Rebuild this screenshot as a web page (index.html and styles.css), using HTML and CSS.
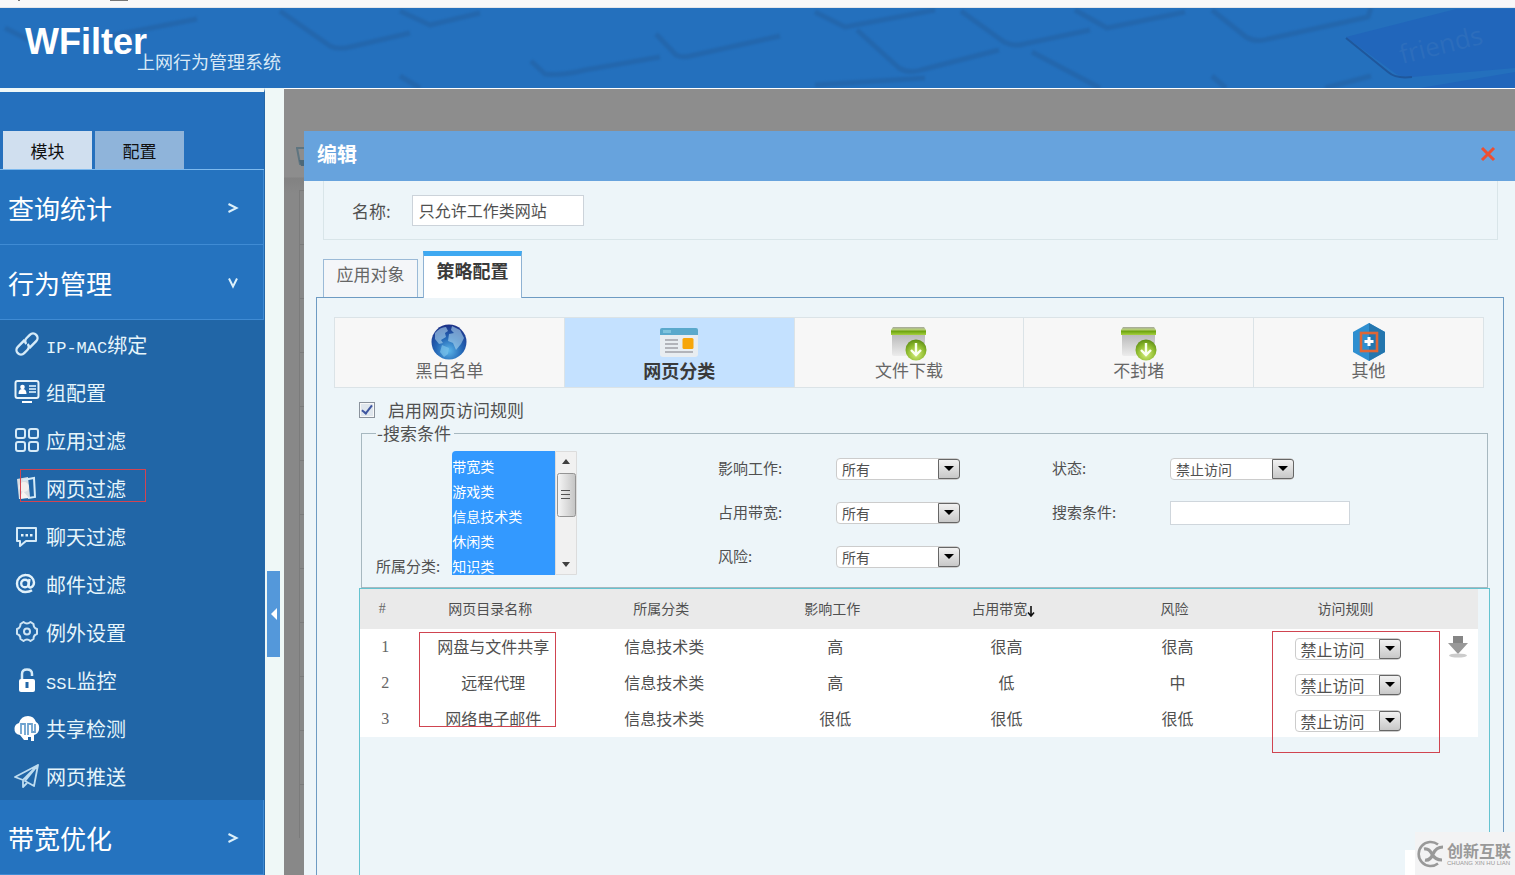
FILE: index.html
```html
<!DOCTYPE html>
<html lang="zh-CN">
<head>
<meta charset="utf-8">
<title>WFilter 上网行为管理系统</title>
<link rel="stylesheet" href="styles.css">
</head>
<body>
<svg width="0" height="0" class="defs" aria-hidden="true">
  <defs>
    <linearGradient id="boxg" x1="0" y1="0" x2="0" y2="1"><stop offset="0" stop-color="#b4b4b4"/><stop offset="1" stop-color="#ececec"/></linearGradient>
    <linearGradient id="lidg" x1="0" y1="0" x2="0" y2="1"><stop offset="0" stop-color="#a5a5a0"/><stop offset=".3" stop-color="#b8cf7a"/><stop offset=".55" stop-color="#6fa512"/><stop offset="1" stop-color="#a6d040"/></linearGradient>
    <radialGradient id="ballg" cx=".5" cy=".7" r=".7"><stop offset="0" stop-color="#d6ee7c"/><stop offset=".6" stop-color="#8fbc30"/><stop offset="1" stop-color="#5d8d14"/></radialGradient>
    <radialGradient id="globeg" cx=".5" cy=".75" r=".75"><stop offset="0" stop-color="#5ab4e8"/><stop offset=".5" stop-color="#2467b6"/><stop offset="1" stop-color="#1b2f86"/></radialGradient>
    <linearGradient id="thumbg"><stop offset="0" stop-color="#f6f6f6"/><stop offset="1" stop-color="#c4c4c4"/></linearGradient>
    <symbol id="package" viewBox="0 0 38 38">
      <path d="M2 9h33v22q0 2-2 2H4q-2 0-2-2z" fill="url(#boxg)"/>
      <path d="M3 4h31l2 3v5H1V7z" fill="url(#lidg)"/>
      <circle cx="26" cy="27" r="10.500" fill="url(#ballg)"/>
      <path d="M26 20v11M21 27l5 5 5-5" fill="none" stroke="#fafff0" stroke-width="2.400"/>
    </symbol>
  </defs>
</svg>
<div class="strip"><svg width="140" height="8" aria-hidden="true"><path d="M18 0h2v1h-2zM110 0h18v1h-18z" fill="#777"/></svg></div>
<header class="banner">
  <svg class="keys" viewBox="0 0 1515 80" preserveAspectRatio="xMaxYMin slice" aria-hidden="true">
    <g fill="none" stroke="#235e9e" stroke-width="5" stroke-linejoin="round" opacity=".5">
      <path d="M5 20l28 14M105 29l92-18M280 3l50 35q8 4 20 1l60-14M400 3l30 14 50-12M400 68l20 12"/>
      <path d="M531 53l14 13q16 2 40-4l75-13M656 26l20 21q6 3 14 1l90-20M815 4l30 15 90-17M857 22l42 38q10 6 22 2l78-20M961 3l43 31q10 5 20 2l66-14M1032 44l68 36M1075 2l32 18 78-16"/>
      <path d="M1212 2l34 27q10 6 22 2l100-22 3-9M815 77l110-7M1212 68l14 12M1325 80l46-12"/>
    </g>
    <path d="M1346 29l110-28h59v59l-103 9q-12 1-20-6zM1420 80l95-16v16z" fill="#2166bb"/>
    <path d="M1346 30l42 34q8 7 24 5" fill="none" stroke="#1f579c" stroke-width="2"/>
    <text x="1402" y="56" transform="rotate(-14 1402 56)" class="keycap">friends</text>
  </svg>
  <div class="brand"><h1>WFilter</h1><p>上网行为管理系统</p></div>
</header>
<div class="shell">
  <nav class="side">
    <div class="side-tabs"><button class="on">模块</button><button>配置</button></div>
    <button class="section">查询统计<svg width="12" height="12" viewBox="0 0 12 12"><path d="M1.500 2L9.500 6l-8 4"/></svg></button>
    <button class="section">行为管理<svg width="12" height="12" viewBox="0 0 12 12"><path d="M2 1.500L6 9.500l4-8"/></svg></button>
    <ul class="menu">
      <li><a href="#"><svg viewBox="0 0 26 26"><g transform="rotate(-45 13 13)" fill="none" stroke="#d6ebf8" stroke-width="2.400"><path d="M13 10V8.500H4.500a4.500 4.500 0 0 0 0 9H9q4 0 4.500-4"/><path d="M13 16v1.500h8.500a4.500 4.500 0 0 0 0-9H17q-4 0-4.500 4"/></g></svg><span><span class="latin">IP-MAC</span>绑定</span></a></li>
      <li><a href="#"><svg viewBox="0 0 26 26"><rect x="1.500" y="2" width="23" height="17" rx="2" fill="none" stroke="#e6f3fa" stroke-width="2"/><circle cx="8.500" cy="8" r="2.300" fill="#fff"/><path d="M4.500 15q0-5 4-5t4 5zM8 22h10v2H8z" fill="#fff"/><path d="M15 7h7M15 10h7M15 13h7" stroke="#b7d6ed" stroke-width="2"/></svg>组配置</a></li>
      <li><a href="#"><svg viewBox="0 0 26 26" fill="none" stroke="#d6ebf8" stroke-width="2"><rect x="2" y="2" width="9" height="9" rx="2"/><rect x="15" y="2" width="9" height="9" rx="2"/><rect x="2" y="15" width="9" height="9" rx="2"/><rect x="15" y="15" width="9" height="9" rx="2"/></svg>应用过滤</a></li>
      <li class="marked"><a href="#"><svg viewBox="0 0 26 26"><path d="M3 4l11-2 2 20-11 2z" fill="#d9dde2"/><path d="M9 5L20 3l1 19-7 1" fill="none" stroke="#d6ebf8" stroke-width="2"/><circle cx="10" cy="12" r="5" fill="#f2efee"/><path d="M5 24l4-8 6 7z" fill="#f7f4f1"/></svg>网页过滤</a></li>
      <li><a href="#"><svg viewBox="0 0 26 26"><path d="M3 5h19v13H12l-6 5v-5H3z" fill="none" stroke="#d6ebf8" stroke-width="2" stroke-linejoin="round"/><path d="M7 11h2.500v2.500H7zM11.500 11H14v2.500h-2.500zM16 11h2.500v2.500H16z" fill="#e6f3fa"/></svg>聊天过滤</a></li>
      <li><a href="#"><svg viewBox="0 0 26 26" fill="none" stroke="#e2f2fb" stroke-width="2.400"><circle cx="11" cy="12.500" r="3.800"/><path d="M15.500 8l-1 6q0 3 2.500 2.300Q20 15 20 11.500A8 8 0 0 0 12 4a8.600 8.600 0 0 0-9 8.700A8.200 8.200 0 0 0 11.500 21q4 0 6.500-1.700"/></svg>邮件过滤</a></li>
      <li><a href="#"><svg viewBox="0 0 26 26" fill="none" stroke="#cfe5f4" stroke-width="2"><path d="M9.500 3q3.500 3 7 0l3 2q0 4 3.500 5v5q-3.500 1-3.500 5l-3 2q-3.500-3-7 0l-3-2q0-4-3.500-5v-5q3.500-1 3.500-5z" stroke-linejoin="round"/><circle cx="13" cy="12.500" r="3"/></svg>例外设置</a></li>
      <li><a href="#"><svg viewBox="0 0 26 26"><path d="M8 13V7q0-4.500 5-4.500T18 7v2" fill="none" stroke="#d6ebf8" stroke-width="2.500"/><rect x="5" y="12" width="16" height="13" rx="2" fill="#fff"/><path d="M13 15v6" stroke="#2167a8" stroke-width="3"/></svg><span><span class="latin">SSL</span>监控</span></a></li>
      <li><a href="#"><svg viewBox="0 0 26 26"><path d="M6 20Q0 19 .5 13 1 9 5 8q2-7 9-7 6 0 8 6 4 2 3 8-1 4-5 5v6h-3v-4h-3v3h-4z" fill="#fff"/><path d="M7 19V9h4v11M14 20V9h4v9M21 9v8h-3" fill="none" stroke="#6da2cf" stroke-width="1.800"/></svg>共享检测</a></li>
      <li><a href="#"><svg viewBox="0 0 26 26" fill="none" stroke="#bddcf0" stroke-width="1.800" stroke-linejoin="round"><path d="M24 2L1 14l8 3zM24 2L11 18l9 5zM9 17v7l4-4"/></svg>网页推送</a></li>
    </ul>
    <button class="section">带宽优化<svg width="12" height="12" viewBox="0 0 12 12"><path d="M1.500 2L9.500 6l-8 4"/></svg></button>
  </nav>
  <div class="gutter"><button class="collapse" aria-label="收起菜单"></button></div>
  <main class="work">
    <div class="dimmed" aria-hidden="true"><svg width="20" height="20" viewBox="0 0 20 20"><path d="M2 1h16M3 1l3 16h14" fill="none" stroke="#5f7580" stroke-width="2"/><path d="M5 13h15v6H7z" fill="#4d6878"/></svg><i></i><i></i><i></i><i></i><i></i><i></i><i></i><i></i><i></i><i></i><i></i><i></i></div>
    <section class="dialog">
      <header class="dialog-head"><h2>编辑</h2><button aria-label="关闭"><svg width="16" height="16" viewBox="0 0 16 16"><path d="M2 2l12 12M14 2L2 14" stroke="#ec4f32" stroke-width="3"/></svg></button></header>
      <div class="dialog-body">
        <div class="name-row"><label for="name">名称:</label><input id="name" value="只允许工作类网站"></div>
        <div class="tabs"><button>应用对象</button><button class="on">策略配置</button></div>
        <div class="panel">
          <div class="kinds">
            <button><svg viewBox="0 0 38 38"><circle cx="19" cy="19" r="17.500" fill="url(#globeg)"/><path d="M5 10q5-6 11-6l2 4-3 2 1 4-5 3 2 3-4 1-4-5zM22 3l8 4 4 8-3 6-5 6-3-7-5-2 1-7 5-1-3-3z" fill="#aed5ef" opacity=".6"/><path d="M12 22l7 3-1 6-4 3-4-5z" fill="#7cc3eb" opacity=".7"/></svg>黑白名单</button>
            <button class="on"><svg viewBox="0 0 38 38"><path d="M0 12h38v19q0 3-3 3H3q-3 0-3-3z" fill="#e8edf1"/><path d="M0 7q0-2 2-2h34q2 0 2 2v5H0z" fill="#5aa9cc"/><path d="M3 7h8v3H3z" fill="#7fc4de"/><rect x="22.500" y="15" width="11" height="11" rx="1.500" fill="#f6a60b"/><path d="M5 17h13M5 21h13M5 25h13M5 29h28" stroke="#b2b4ba" stroke-width="2"/></svg>网页分类</button>
            <button><svg><use href="#package"/></svg>文件下载</button>
            <button><svg><use href="#package"/></svg>不封堵</button>
            <button><svg viewBox="0 0 38 38"><path d="M19 0l16 9v20l-16 9-16-9V9z" fill="#2f8fd0"/><path d="M19 0l16 9v20l-16 9z" fill="#2476ae"/><rect x="11" y="10" width="16" height="18" fill="none" stroke="#df6636" stroke-width="2.600"/><path d="M19 14v9M14.500 18.500h9" stroke="#fff" stroke-width="3"/></svg>其他</button>
          </div>
          <div class="rules">
            <label class="enable"><input type="checkbox" checked>启用网页访问规则</label>
            <fieldset class="search">
              <legend>-搜索条件</legend>
              <div class="filters">
                <div class="cat">
                  <label for="cat">所属分类:</label>
                  <div class="list">
                    <select id="cat" multiple size="5"><option selected>带宽类</option><option selected>游戏类</option><option selected>信息技术类</option><option selected>休闲类</option><option selected>知识类</option></select>
                    <svg width="22" height="124" viewBox="0 0 22 124" aria-hidden="true"><path d="M.5.5h21v123H.500z" fill="#f1f1f1" stroke="#dcdcdc"/><path d="M7 13l4-5 4 5zM7 111h8l-4 5z" fill="#404040"/><rect x="2.500" y="22.500" width="18" height="43" rx="2" fill="url(#thumbg)" stroke="#949494"/><path d="M6 39.500h9M6 43.500h9M6 47.500h9" stroke="#555"/></svg>
                  </div>
                </div>
                <div class="pairs">
                  <label for="work">影响工作:</label><span class="pick"><select id="work"><option>所有</option></select></span>
                  <label for="band">占用带宽:</label><span class="pick"><select id="band"><option>所有</option></select></span>
                  <label for="risk">风险:</label><span class="pick"><select id="risk"><option>所有</option></select></span>
                </div>
                <div class="pairs">
                  <label for="state">状态:</label><span class="pick"><select id="state"><option>禁止访问</option></select></span>
                  <label for="term">搜索条件:</label><input id="term">
                </div>
              </div>
            </fieldset>
            <div class="results">
              <div class="table-wrap">
              <table>
                <colgroup><col class="c-num"><col class="c-data"><col class="c-data"><col class="c-data"><col class="c-data"><col class="c-data"><col class="c-data"><col class="c-act"></colgroup>
                <thead><tr><th class="num">#</th><th>网页目录名称</th><th>所属分类</th><th>影响工作</th><th>占用带宽<svg width="8" height="12" viewBox="0 0 8 12"><path d="M4 1v10M1 7.500L4 11l3-3.500" fill="none" stroke="#111" stroke-width="1.600"/></svg></th><th>风险</th><th>访问规则</th><th></th></tr></thead>
                <tbody>
                  <tr><td class="num">1</td><td>网盘与文件共享</td><td>信息技术类</td><td>高</td><td>很高</td><td>很高</td><td><span class="pick small"><select aria-label="访问规则 1"><option>禁止访问</option></select></span></td><td class="act"><button aria-label="下移"><svg width="20" height="22" viewBox="0 0 20 22"><path d="M5 0h10v7h5L10 18 0 7h5z" fill="#999"/><path d="M5 0h10v7H5z" fill="#858585"/><ellipse cx="10" cy="19.500" rx="9" ry="2" fill="#ccc"/></svg></button></td></tr>
                  <tr><td class="num">2</td><td>远程代理</td><td>信息技术类</td><td>高</td><td>低</td><td>中</td><td><span class="pick small"><select aria-label="访问规则 2"><option>禁止访问</option></select></span></td><td></td></tr>
                  <tr><td class="num">3</td><td>网络电子邮件</td><td>信息技术类</td><td>很低</td><td>很低</td><td>很低</td><td><span class="pick small"><select aria-label="访问规则 3"><option>禁止访问</option></select></span></td><td></td></tr>
                </tbody>
              </table>
              <i class="mark names"></i><i class="mark access"></i>
              </div>
            </div>
          </div>
        </div>
      </div>
    </section>
  </main>
</div>
<aside class="watermark"><svg width="28" height="28" viewBox="0 0 28 28" fill="none" stroke="#999"><path d="M21 4.500A12 12 0 1 0 21 23.500" stroke-width="2.600"/><path d="M7 9q5-1 8 5t10 6M26 7q-7 0-10 7t-8 6" stroke-width="3.200"/></svg><div><b>创新互联</b><small>CHUANG XIN HU LIAN</small></div></aside>
</body>
</html>
```

FILE: styles.css
```css
*, *::before, *::after { box-sizing: border-box; }
body {
  margin: 0;
  height: 100vh;
  display: flex;
  flex-direction: column;
  overflow: hidden;
  background: #eff8f8;
  color: #505050;
  font-family: "Noto Sans CJK SC", "Liberation Sans", sans-serif;
  font-size: 16px;
}
button, input, select { font-family: inherit; color: inherit; margin: 0; }
button { border: 0; padding: 0; background: none; cursor: pointer; }
h1, h2, p, ul { margin: 0; padding: 0; }
svg { flex: none; }
.defs { position: absolute; }

.strip { flex: none; height: 8px; background: #f8f8f9; border-bottom: 1px solid #e4e6ea; }
.strip svg { display: block; }

.banner { position: relative; flex: none; height: 80px; background: #2470bd; overflow: hidden; }
.keys { position: absolute; inset: 0; width: 100%; height: 100%; }
.keys g { filter: blur(1px); }
.keycap { font: 26px "Open Sans", sans-serif; fill: #2c6dbc; }
.brand { position: relative; color: #fff; padding: 14px 0 0 25px; }
.brand h1 { font: bold 36px/40px "Liberation Sans", sans-serif; }
.brand p { font-size: 18px; line-height: 20px; color: #d8e9f7; padding-left: 112px; margin-top: -11px; }

.shell { flex: 1; min-height: 0; display: flex; }
.side { width: 265px; flex: none; background: #2570bd; border-top: 4px solid #eff8f8; border-right: 1px solid #2467a8; }
.side-tabs { display: flex; gap: 3px; padding: 39px 0 0 3px; border-bottom: 1px solid #7db9ee; }
.side-tabs button { width: 89px; height: 38px; font-size: 17px; color: #111; background: #8fb4da; }
.side-tabs .on { background: #d0dfef; }
.section {
  display: flex;
  align-items: center;
  justify-content: space-between;
  width: 100%;
  height: 75px;
  padding: 1px 24px 0 8px;
  font-size: 26px;
  color: #fff;
  background: #2573bf;
  border: solid #3f8bd4;
  border-width: 0 1px 1px 0;
}
.section svg { fill: none; stroke: #dcf0fa; stroke-width: 2; }
.menu { list-style: none; background: #2166a7; }
.menu li { position: relative; height: 48px; }
.menu a {
  display: flex;
  align-items: center;
  gap: 6px;
  height: 100%;
  padding: 0 0 0 14px;
  font-size: 20px;
  color: #e6f5fb;
  text-decoration: none;
}
.menu svg { width: 26px; height: 26px; }
.latin { font-family: "Liberation Mono", monospace; font-size: 17px; }
.marked::after { content: ""; position: absolute; left: 20px; top: 5px; width: 126px; height: 33px; border: 1px solid #d14452; }

.gutter { width: 19px; flex: none; display: flex; flex-direction: column; padding: 483px 4px 0 2px; background: #eff8f7; }
.collapse { display: flex; align-items: center; justify-content: center; height: 86px; width: 13px; background: #5498da; }
.collapse::before { content: ""; border: solid transparent; border-width: 6px 6px 6px 0; border-right-color: #fff; }

.work { position: relative; flex: 1; min-width: 0; padding: 42px 0 0 20px; background: #8d8d8d; border-top: 1px solid #fff; }
.dimmed { position: absolute; left: 0; top: 58px; bottom: 0; width: 20px; overflow: hidden; background: linear-gradient(#8d8d8d 30px, #828282 31px, #888 46px); }
.dimmed svg { display: block; margin: 0 0 23px 10px; }
.dimmed i { display: block; height: 54px; margin-left: 15px; border: solid #7b7b7b; border-width: 1px 0 0 1px; }

.dialog { position: relative; height: 100%; display: flex; flex-direction: column; background: #edf5f9; }
.dialog-head { flex: none; height: 50px; display: flex; align-items: center; justify-content: space-between; padding: 0 19px 4px 13px; background: #67a3dd; color: #fff; }
.dialog-head h2 { font-size: 20px; line-height: 28px; }
.dialog-head svg { display: block; }
.dialog-body { flex: 1; min-height: 0; display: flex; flex-direction: column; padding: 0 11px 0 12px; }
.name-row { display: flex; align-items: center; gap: 21px; height: 59px; margin: 0 6px 0 7px; padding-left: 28px; border: 1px solid #d9e5e9; border-top: 0; font-size: 17px; }
.name-row input { width: 172px; height: 31px; padding: 0 6px; border: 1px solid #ccd3da; background: #fff; font-size: 16px; }
.tabs { display: flex; align-items: flex-end; gap: 5px; margin: 11px 0 0 7px; }
.tabs button { width: 95px; height: 38px; padding-bottom: 10px; font-size: 17px; color: #666; background: #f4f6f9; border: 1px solid #9bbad7; border-bottom: 0; }
.tabs .on { position: relative; width: 99px; height: 47px; margin-bottom: -1px; padding-bottom: 14px; font-size: 18px; font-weight: bold; color: #3a3a3a; background: #fff; border-color: #8fb2d3; border-top: 5px solid #3fa9f1; }
.panel { flex: 1; min-height: 0; display: flex; flex-direction: column; border: 1px solid #6e9bc3; border-bottom: 0; padding: 19px 13px 0 17px; }
.kinds { display: flex; flex: none; margin-right: 6px; border: 1px solid #dbe3e7; }
.kinds button { flex: 1; height: 69px; display: flex; flex-direction: column; align-items: center; padding-top: 5px; font-size: 17px; line-height: 18px; color: #666; background: #f7f7f7; }
.kinds button + button { border-left: 1px solid #dbe3e7; }
.kinds .on { background: #c4e1ff; font-size: 18px; font-weight: bold; color: #3a3a3a; }
.kinds svg { width: 38px; height: 38px; }

.rules { flex: 1; min-height: 0; display: flex; flex-direction: column; margin: 11px 0 0 25px; }
.enable { display: flex; align-items: center; gap: 13px; height: 24px; padding-bottom: 2px; font-size: 17px; line-height: 20px; }
.enable input { appearance: none; width: 16px; height: 16px; display: grid; place-items: center; background: #dfe6ed; border: 1px solid #8a929c; box-shadow: inset 0 0 0 1px #f8f8f8; }
.enable input:checked::before { content: ""; width: 6px; height: 11px; margin-bottom: 3px; border: solid #3f56a0; border-width: 0 2px 2px 0; transform: rotate(38deg); }
.search { flex: none; min-width: 0; margin: 0 2px; padding: 4px 0 8px 14px; border: 1px solid #a7b8c0; }
.search legend { padding: 0 3px 0 1px; font-size: 17px; line-height: 20px; }
.filters { display: grid; grid-template-columns: 342fr 334fr 435fr; font-size: 15px; }
.cat { display: flex; align-items: flex-end; gap: 12px; padding: 4px 0; }
.cat label { line-height: 18px; }
.list { display: flex; height: 124px; }
.list select { width: 103px; height: 124px; padding: 5px 0 0; border: 0; border-radius: 4px 0 0 0; background: #39f; font-size: 14px; overflow: hidden; scrollbar-width: none; outline: 0; }
.list option { height: 25px; min-height: 25px; padding: 0; line-height: 25px; }
.list option:checked { background: linear-gradient(#39f, #39f); color: #fff; }
.pairs { display: grid; grid-template-columns: 118px 1fr; grid-auto-rows: 44px; align-items: center; justify-items: start; }
.pairs label { padding-bottom: 4px; }
.pairs input { width: 180px; height: 24px; border: 1px solid #cfd6dc; background: #fff; }
.pick { position: relative; display: inline-block; width: 124px; height: 22px; }
.pick select { appearance: none; display: block; width: 100%; height: 100%; padding: 0 24px 0 5px; border: 1px solid #ccc; border-radius: 4px; background: #fff; font-size: 14px; line-height: 20px; }
.pick::before { content: ""; position: absolute; top: 1px; right: 0; width: 22px; height: 20px; border: 1px solid #666; border-radius: 0 3px 3px 0; background: linear-gradient(#f2f2f2, #c8c8c8); pointer-events: none; }
.pick::after { content: ""; position: absolute; top: 8px; right: 6px; border: solid transparent; border-width: 5px 5px 0; border-top-color: #000; pointer-events: none; }
.pick.small { width: 106px; vertical-align: middle; }
.pick.small select { font-size: 16px; padding: 0 20px 0 4px; }

.results { flex: 1; min-height: 0; border: 1px solid #65c3d0; border-bottom: 0; padding-right: 11px; }
.table-wrap { position: relative; }
table { width: 100%; table-layout: fixed; border-collapse: collapse; background: #fff; }
.c-num { width: 4%; }
.c-data { width: 15.3%; }
th { height: 40px; padding: 0 0 2px; background: #eaeaea; font-size: 14px; font-weight: normal; text-align: center; }
td { height: 36px; padding: 0 0 2px 6px; font-size: 16px; line-height: 20px; text-align: center; }
.num { padding-bottom: 0; font-family: "Liberation Serif", serif; color: #666; }
th svg { vertical-align: -3px; }
td:nth-child(7), .act { padding-top: 2px; padding-bottom: 0; }
.act svg { display: block; }
.mark { position: absolute; border: 1px solid #d04450; }
.names { left: 5.300%; top: 43px; width: 137px; height: 95px; }
.access { left: 81.600%; top: 42px; width: 168px; height: 122px; }

.watermark { position: absolute; right: 0; bottom: 0; width: 100px; height: 43px; display: flex; align-items: center; gap: 2px; padding-left: 2px; background: #f3f3f4; color: #999; }
.watermark::before { content: ""; position: absolute; right: 100px; bottom: 0; width: 10px; height: 25px; background: #fff; }
.watermark b { display: block; font-size: 16px; line-height: 18px; white-space: nowrap; }
.watermark small { display: block; font: 6px/8px "Liberation Sans", sans-serif; white-space: nowrap; }
```
